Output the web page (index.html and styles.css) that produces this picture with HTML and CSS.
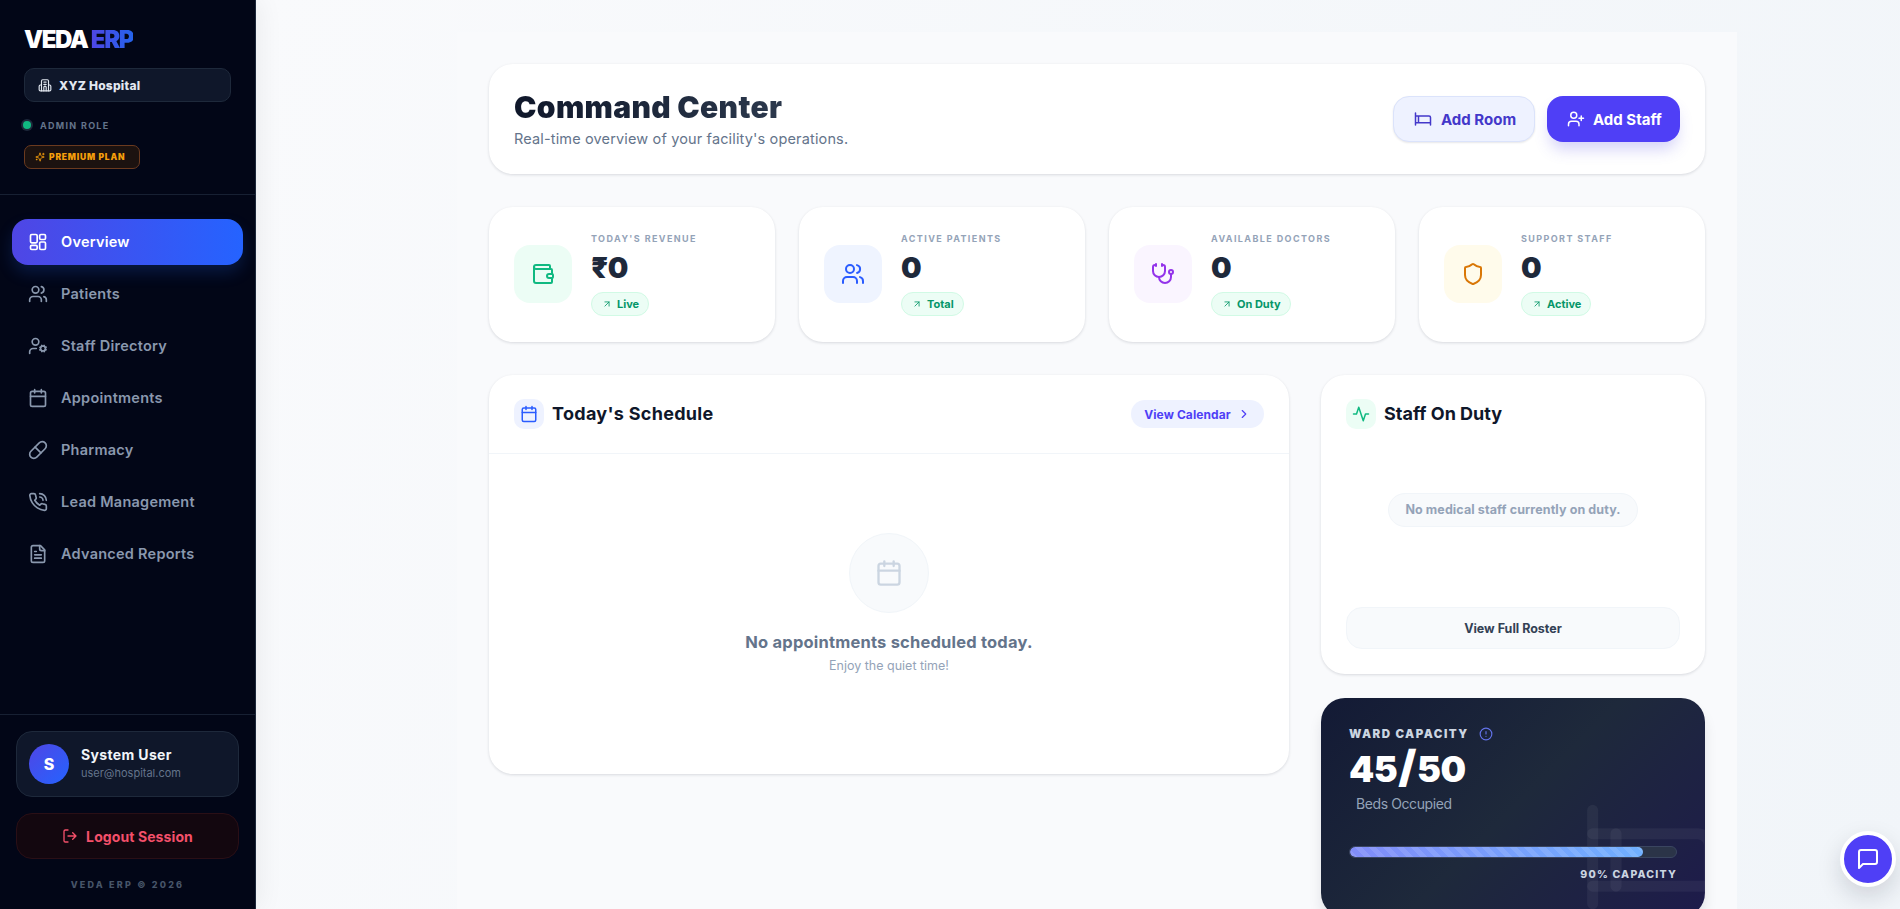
FILE: index.html
```html
<!DOCTYPE html>
<html lang="en">
<head>
<meta charset="utf-8">
<title>Veda ERP</title>
<link rel="stylesheet" href="styles.css">
</head>
<body>
<div class="app">
<aside class="sidebar">
  <div class="brand">
    <div class="logo">VEDA <span>ERP</span></div>
    <div class="hospital">
      <svg class="i14" viewBox="0 0 24 24" stroke="#6d8cff"><path d="M6 22V5a2 2 0 0 1 2-2h8a2 2 0 0 1 2 2v17"/><path d="M6 12H4a2 2 0 0 0-2 2v6a2 2 0 0 0 2 2h16a2 2 0 0 0 2-2v-6a2 2 0 0 0-2-2h-2"/><path d="M10 7h4M10 11h4M10 22v-6a2 2 0 0 1 4 0v6"/></svg>
      <span>XYZ Hospital</span>
    </div>
    <div class="role"><i class="dot"></i><span>ADMIN ROLE</span></div>
    <div class="plan">
      <svg class="i10" viewBox="0 0 24 24" stroke="#f59e0b"><path d="M9.900 15.500a2 2 0 0 0-1.400-1.400l-6.100-1.600a.5.5 0 0 1 0-1l6.100-1.600a2 2 0 0 0 1.400-1.400l1.600-6.100a.5.5 0 0 1 1 0l1.600 6.100a2 2 0 0 0 1.400 1.400l6.100 1.600a.5.5 0 0 1 0 1l-6.100 1.600a2 2 0 0 0-1.400 1.400l-1.600 6.100a.5.5 0 0 1-1 0z"/><path d="M20 3v4M22 5h-4M4 17v2M5 18H3"/></svg>
      <span>PREMIUM PLAN</span>
    </div>
  </div>
  <nav class="nav">
    <a class="nav-item active"><svg class="i20" viewBox="0 0 24 24"><rect x="3" y="3" width="8" height="10" rx="1.500"/><rect x="14" y="3" width="7" height="6" rx="1.500"/><rect x="14" y="12" width="7" height="9" rx="1.500"/><rect x="3" y="16" width="8" height="5" rx="1.500"/></svg>Overview</a>
    <a class="nav-item"><svg class="i20" viewBox="0 0 24 24"><circle cx="9" cy="7" r="4"/><path d="M2 21v-2a4 4 0 0 1 4-4h6a4 4 0 0 1 4 4v2M16 3.100a4 4 0 0 1 0 7.800M22 21v-2a4 4 0 0 0-3-3.900"/></svg>Patients</a>
    <a class="nav-item"><svg class="i20" viewBox="0 0 24 24"><circle cx="18" cy="15" r="3"/><circle cx="9" cy="7" r="4"/><path d="M10 15H6a4 4 0 0 0-4 4v2M21.700 16.400l-.9-.3M15.200 13.900l-.9-.3M16.600 18.700l.3-.9M19.100 12.200l.3-.9M19.600 18.700l-.4-1M16.800 12.300l-.4-1M14.300 16.600l1-.4M20.700 13.800l1-.4"/></svg>Staff Directory</a>
    <a class="nav-item"><svg class="i20" viewBox="0 0 24 24"><rect x="3" y="4" width="18" height="18" rx="2"/><path d="M8 2v4M16 2v4M3 10h18"/></svg>Appointments</a>
    <a class="nav-item"><svg class="i20" viewBox="0 0 24 24"><path d="m10.500 20.500 10-10a4.950 4.950 0 1 0-7-7l-10 10a4.950 4.950 0 1 0 7 7Z"/><path d="m8.500 8.500 7 7"/></svg>Pharmacy</a>
    <a class="nav-item"><svg class="i20" viewBox="0 0 24 24"><path d="M14 2a8 8 0 0 1 8 8M14 6a4 4 0 0 1 4 4"/><path d="M22 17v3a2 2 0 0 1-2.200 2 19.800 19.800 0 0 1-8.600-3 19.500 19.500 0 0 1-6-6 19.800 19.800 0 0 1-3-8.700A2 2 0 0 1 4.100 2h3a2 2 0 0 1 2 1.700c.1 1 .4 1.900.7 2.800a2 2 0 0 1-.5 2.100L8.100 9.900a16 16 0 0 0 6 6l1.300-1.300a2 2 0 0 1 2.100-.4c.9.3 1.800.6 2.800.7A2 2 0 0 1 22 17Z"/></svg>Lead Management</a>
    <a class="nav-item"><svg class="i20" viewBox="0 0 24 24"><path d="M15 2H6a2 2 0 0 0-2 2v16a2 2 0 0 0 2 2h12a2 2 0 0 0 2-2V7Z"/><path d="M14 2v4a2 2 0 0 0 2 2h4M10 9H8M16 13H8M16 17H8"/></svg>Advanced Reports</a>
  </nav>
  <div class="side-foot">
    <div class="user">
      <div class="avatar">S</div>
      <div class="user-text"><strong>System User</strong><small>user@hospital.com</small></div>
    </div>
    <button class="logout"><svg class="i16" viewBox="0 0 24 24"><path d="M9 21H5a2 2 0 0 1-2-2V5a2 2 0 0 1 2-2h4M16 17l5-5-5-5M21 12H9"/></svg>Logout Session</button>
    <div class="copy">VEDA ERP © 2026</div>
  </div>
</aside>
<main class="main">
  <div class="content">
    <section class="card header">
      <div>
        <h1>Command Center</h1>
        <p>Real-time overview of your facility's operations.</p>
      </div>
      <div class="actions">
        <button class="btn btn-light"><svg class="i18" viewBox="0 0 24 24"><path d="M2 4v16M2 8h18a2 2 0 0 1 2 2v10M2 17h20M6 8v9"/></svg>Add Room</button>
        <button class="btn btn-primary"><svg class="i18" viewBox="0 0 24 24"><path d="M16 21v-2a4 4 0 0 0-4-4H6a4 4 0 0 0-4 4v2"/><circle cx="9" cy="7" r="4"/><path d="M19 8v6M22 11h-6"/></svg>Add Staff</button>
      </div>
    </section>
    <section class="stats">
      <div class="card stat">
        <div class="stat-icon green"><svg class="i24" viewBox="0 0 24 24"><path d="M19 7V4a1 1 0 0 0-1-1H5a2 2 0 0 0 0 4h15a1 1 0 0 1 1 1v4h-3a2 2 0 0 0 0 4h3a1 1 0 0 0 1-1v-2a1 1 0 0 0-1-1"/><path d="M3 5v14a2 2 0 0 0 2 2h15a1 1 0 0 0 1-1v-4"/></svg></div>
        <div class="stat-body"><div class="label">TODAY'S REVENUE</div><div class="value">₹0</div><div class="pill"><svg class="i10" viewBox="0 0 24 24"><path d="M7 7h10v10M7 17 17 7"/></svg>Live</div></div>
      </div>
      <div class="card stat">
        <div class="stat-icon blue"><svg class="i24" viewBox="0 0 24 24"><circle cx="9" cy="7" r="4"/><path d="M2 21v-2a4 4 0 0 1 4-4h6a4 4 0 0 1 4 4v2M16 3.100a4 4 0 0 1 0 7.800M22 21v-2a4 4 0 0 0-3-3.900"/></svg></div>
        <div class="stat-body"><div class="label">ACTIVE PATIENTS</div><div class="value">0</div><div class="pill"><svg class="i10" viewBox="0 0 24 24"><path d="M7 7h10v10M7 17 17 7"/></svg>Total</div></div>
      </div>
      <div class="card stat">
        <div class="stat-icon purple"><svg class="i24" viewBox="0 0 24 24"><path d="M11 2v2M5 2v2M5 3H4a2 2 0 0 0-2 2v4a6 6 0 0 0 12 0V5a2 2 0 0 0-2-2h-1"/><path d="M8 15a6 6 0 0 0 12 0v-3"/><circle cx="20" cy="10" r="2"/></svg></div>
        <div class="stat-body"><div class="label">AVAILABLE DOCTORS</div><div class="value">0</div><div class="pill"><svg class="i10" viewBox="0 0 24 24"><path d="M7 7h10v10M7 17 17 7"/></svg>On Duty</div></div>
      </div>
      <div class="card stat">
        <div class="stat-icon amber"><svg class="i24" viewBox="0 0 24 24"><path d="M20 13c0 5-3.500 7.500-7.660 8.950a1 1 0 0 1-.67-.01C7.500 20.500 4 18 4 13V6a1 1 0 0 1 1-1c2 0 4.500-1.200 6.240-2.720a1.170 1.170 0 0 1 1.520 0C14.510 3.810 17 5 19 5a1 1 0 0 1 1 1z"/></svg></div>
        <div class="stat-body"><div class="label">SUPPORT STAFF</div><div class="value">0</div><div class="pill"><svg class="i10" viewBox="0 0 24 24"><path d="M7 7h10v10M7 17 17 7"/></svg>Active</div></div>
      </div>
    </section>
    <section class="lower">
      <div class="card schedule">
        <div class="sched-head">
          <div class="title"><span class="t-icon t-blue"><svg class="i18" viewBox="0 0 24 24"><rect x="3" y="4" width="18" height="18" rx="2"/><path d="M8 2v4M16 2v4M3 10h18"/></svg></span><h2 class="h2-wide">Today's Schedule</h2></div>
          <button class="view-cal">View Calendar<svg class="i14" viewBox="0 0 24 24"><path d="m9 18 6-6-6-6"/></svg></button>
        </div>
        <div class="empty">
          <div class="empty-icon"><svg class="i28" viewBox="0 0 24 24"><rect x="3" y="4" width="18" height="18" rx="2"/><path d="M8 2v4M16 2v4M3 10h18"/></svg></div>
          <div class="empty-title">No appointments scheduled today.</div>
          <div class="empty-sub">Enjoy the quiet time!</div>
        </div>
      </div>
      <div class="right">
        <div class="card duty">
          <div class="title"><span class="t-icon t-green"><svg class="i18" viewBox="0 0 24 24"><path d="M22 12h-4l-3 9L9 3l-3 9H2"/></svg></span><h2>Staff On Duty</h2></div>
          <div class="duty-mid"><span class="no-staff">No medical staff currently on duty.</span></div>
          <button class="roster">View Full Roster</button>
        </div>
        <div class="ward">
          <svg class="ward-bg" viewBox="0 0 24 24"><path d="M2 4v16"/><path d="M2 8h18a2 2 0 0 1 2 2v10"/><path d="M2 17h20"/><path d="M6 8v9"/></svg>
          <div class="ward-label">WARD CAPACITY<svg class="i14" viewBox="0 0 24 24"><circle cx="12" cy="12" r="10"/><path d="M12 8v4M12 16h.01"/></svg></div>
          <div class="ward-num">45<b>/</b>50</div>
          <div class="ward-sub">Beds Occupied</div>
          <div class="bar"><div class="bar-fill" style="width:90%"></div></div>
          <div class="bar-cap">90% CAPACITY</div>
        </div>
      </div>
    </section>
  </div>
</main>
</div>
<button class="chat"><svg class="i24" viewBox="0 0 24 24"><path d="M21 15a2 2 0 0 1-2 2H7l-4 4V5a2 2 0 0 1 2-2h14a2 2 0 0 1 2 2z"/></svg></button>
</body>
</html>
```
FILE: styles.css
```css
* { box-sizing: border-box; }
html, body { margin: 0; height: 100%; overflow: hidden; }
body { font-family: Inter, "Noto Sans", sans-serif; background: #f1f5f9; color: #0f172a; }
svg { fill: none; stroke: currentColor; stroke-width: 2; stroke-linecap: round; stroke-linejoin: round; flex: none; }
button { font-family: inherit; border: 0; cursor: pointer; white-space: nowrap; }
h1, h2, p { margin: 0; }
.i10 { width: 10px; height: 10px; } .i12 { width: 12px; height: 12px; } .i14 { width: 14px; height: 14px; }
.i16 { width: 16px; height: 16px; } .i18 { width: 18px; height: 18px; } .i20 { width: 20px; height: 20px; }
.i24 { width: 24px; height: 24px; } .i28 { width: 28px; height: 28px; }
.app { display: flex; height: 909px; }
.sidebar { width: 256px; flex: none; background: #020617; display: flex; flex-direction: column; border-right: 1px solid #1e293b; box-shadow: 4px 0 24px rgba(15, 23, 42, .06); position: relative; }
.brand { padding: 26px 24px 24px; height: 195px; border-bottom: 1px solid #172033; }
.logo { font-weight: 900; font-size: 24px; color: #fff; letter-spacing: -1.400px; line-height: 28px; }
.logo span { background: linear-gradient(90deg, #4f46e5, #2563eb); -webkit-background-clip: text; background-clip: text; color: transparent; }
.hospital { margin-top: 14px; width: 207px; height: 34px; border: 1px solid #1e293b; border-radius: 10px; background: #0f172a; display: flex; align-items: center; gap: 7px; padding-left: 13px; font-size: 12px; font-weight: 800; color: #e2e8f0; letter-spacing: .25px; }
.role { margin-top: 16px; display: flex; align-items: center; gap: 9px; margin-left: -2px; font-size: 9px; font-weight: 700; color: #64748b; letter-spacing: 1.300px; height: 14px; }
.dot { width: 8px; height: 8px; border-radius: 50%; background: #10b981; box-shadow: 0 0 0 2px #1e293b; margin-left: 1px; }
.plan { margin-top: 13px; display: inline-flex; align-items: center; gap: 4px; width: 116px; height: 24px; border: 1px solid #6b3a1f; border-radius: 7px; background: #1c1210; padding-left: 10px; font-size: 8.500px; font-weight: 900; color: #f59e0b; letter-spacing: .8px; white-space: nowrap; }
.nav { flex: 1; padding: 24px 12px 0; display: flex; flex-direction: column; gap: 6px; }
.nav-item { height: 46px; border-radius: 16px; display: flex; align-items: center; gap: 13px; padding: 0 0 2px 16px; font-size: 14.500px; font-weight: 600; color: #8a98ae; letter-spacing: .25px; }
.nav-item svg { margin-top: 2px; }
.nav-item.active { background: linear-gradient(90deg, #4f46e5, #2563ff); color: #fff; box-shadow: 0 8px 16px rgba(37, 99, 235, .2); }
.side-foot { border-top: 1px solid #172033; padding: 16px 16px 0; height: 195px; }
.user { height: 66px; border: 1px solid #1e293b; border-radius: 16px; background: #0f172a; display: flex; align-items: center; gap: 12px; padding-left: 12px; }
.avatar { width: 40px; height: 40px; border-radius: 50%; background: linear-gradient(135deg, #4f46e5, #2563ff); color: #fff; font-size: 16px; font-weight: 800; display: flex; align-items: center; justify-content: center; }
.user-text { display: flex; flex-direction: column; margin-top: -2px; }
.user-text strong { color: #f1f5f9; font-size: 14px; font-weight: 700; line-height: 20px; letter-spacing: .35px; }
.user-text small { color: #64748b; font-size: 11px; line-height: 16px; }
.logout { margin-top: 16px; width: 100%; height: 46px; border: 1px solid #2a0f16; border-radius: 16px; background: #13070f; color: #f4506a; display: flex; align-items: center; justify-content: center; gap: 8px; font-size: 14px; font-weight: 700; letter-spacing: .1px; }
.copy { margin-top: 20px; text-align: center; font-size: 9px; font-weight: 800; letter-spacing: 2.200px; color: #475569; }
.main { flex: 1; min-width: 0; padding: 32px 163px 0 201px; background: linear-gradient(110deg, #f9fafc, #f1f5f9); }
.content { width: 1280px; height: 877px; background: #f9fafc; padding: 32px 32px 0; }
.card { background: #fff; border-radius: 24px; box-shadow: 0 1px 3px rgba(15, 23, 42, .14); }
.header { height: 110px; display: flex; align-items: center; justify-content: space-between; padding: 0 25px; }
.header > div:first-child { margin-top: -3px; }
h1 { font-size: 30px; font-weight: 900; letter-spacing: .35px; line-height: 40px; background: linear-gradient(90deg, #0f172a, #334155); -webkit-background-clip: text; background-clip: text; color: transparent; }
.header p { margin-top: 2px; font-size: 14.500px; color: #64748b; line-height: 20px; letter-spacing: .15px; }
.actions { display: flex; gap: 12px; }
.btn { height: 46px; border-radius: 16px; display: flex; align-items: center; font-size: 15px; font-weight: 700; padding: 0 0 0 20px; }
.btn-light { width: 142px; gap: 9px; background: #eef2ff; color: #4338ca; border: 1px solid #dbe3fb; box-shadow: 0 1px 2px rgba(15, 23, 42, .1); }
.btn-primary { width: 133px; gap: 8px; background: #4f3ff6; color: #fff; box-shadow: 0 10px 15px -3px rgba(79, 70, 229, .25); }
.stats { margin-top: 33px; display: grid; grid-template-columns: repeat(4, 1fr); gap: 24px; }
.stat { height: 135px; display: flex; align-items: flex-start; padding: 24px 24px 24px 25px; gap: 19px; }
.stat-icon { margin-top: 14px; width: 58px; height: 58px; border-radius: 16px; display: flex; align-items: center; justify-content: center; }
.green { background: #ecfdf5; color: #10b981; } .blue { background: #eff4ff; color: #2a5cff; } .purple { background: #faf5ff; color: #9333ea; } .amber { background: #fffbeb; color: #d97706; }
.label { font-size: 9px; font-weight: 700; letter-spacing: 1.400px; color: #94a3b8; line-height: 16px; }
.value { font-size: 29px; font-weight: 900; line-height: 34px; color: #1e293b; margin-top: 4px; letter-spacing: -.5px; }
.pill { margin-top: 7px; display: inline-flex; align-items: center; gap: 5px; height: 24px; padding: 0 9px 0 10px; border: 1px solid #d1fae5; border-radius: 12px; background: #ecfdf5; color: #059669; font-size: 11px; font-weight: 700; }
.lower { margin-top: 33px; display: grid; grid-template-columns: 800px 384px; gap: 32px; align-items: start; }
.schedule { height: 399px; display: flex; flex-direction: column; }
.sched-head { height: 79px; padding: 0 25px; border-bottom: 1px solid #f1f5f9; display: flex; align-items: center; justify-content: space-between; }
.title { display: flex; align-items: center; gap: 8px; }
.t-icon { width: 30px; height: 30px; border-radius: 10px; display: flex; align-items: center; justify-content: center; }
.t-blue { background: #eef2ff; color: #2a5cff; }
.t-green { background: #ecfdf5; color: #10b981; }
h2 { font-size: 18px; font-weight: 700; color: #0f172a; margin-bottom: 2px; }
.h2-wide { letter-spacing: .3px; }
.view-cal { width: 133px; height: 28px; border-radius: 14px; background: #eef2ff; color: #4f3ff6; display: flex; align-items: center; justify-content: center; gap: 6px; font-size: 12px; font-weight: 700; letter-spacing: .1px; }
.empty { flex: 1; display: flex; flex-direction: column; align-items: center; padding-top: 79px; }
.empty-icon { width: 80px; height: 80px; border-radius: 50%; background: #f8fafc; border: 1px solid #f1f5f9; color: #cbd5e1; display: flex; align-items: center; justify-content: center; }
.empty-title { margin-top: 17px; font-size: 16.500px; font-weight: 700; color: #64748b; line-height: 24px; letter-spacing: .2px; }
.empty-sub { margin-top: 2px; font-size: 12.500px; color: #94a3b8; line-height: 20px; }
.right { display: flex; flex-direction: column; gap: 24px; }
.duty { height: 299px; padding: 24px 25px 25px; display: flex; flex-direction: column; }
.duty-mid { flex: 1; display: flex; align-items: center; justify-content: center; padding-bottom: 17px; }
.no-staff { height: 34px; display: flex; align-items: center; padding: 0 16px; border: 1px solid #f1f5f9; border-radius: 17px; background: #f8fafc; color: #94a3b8; font-size: 12.500px; font-weight: 700; letter-spacing: .1px; white-space: nowrap; }
.roster { height: 42px; border: 1px solid #f1f5f9; border-radius: 16px; background: #f8fafc; color: #334155; font-size: 12.500px; font-weight: 700; }
.ward { position: relative; height: 219px; border-radius: 24px; overflow: hidden; padding: 28px 28px 0 28px; color: #fff; background: linear-gradient(135deg, #131a35, #1e293b 50%, #1e1b4b); box-shadow: 0 10px 15px -3px rgba(15, 23, 42, .15); }
.ward-bg { position: absolute; right: -16px; top: 89px; width: 140px; height: 140px; stroke: rgba(255, 255, 255, .05); stroke-width: 1.900; }
.ward-label { display: flex; align-items: center; gap: 10px; font-size: 11.500px; font-weight: 900; letter-spacing: 1.500px; color: #cbd5e1; line-height: 16px; }
.ward-label svg { color: #6272e8; }
.ward-num { margin-top: 6px; font-size: 36px; font-weight: 900; line-height: 36px; color: #fff; letter-spacing: -.5px; }
.ward-num b { font-weight: 900; font-size: 44px; margin: 0 1px; }
.ward-sub { margin: 7px 0 0 7px; font-size: 14px; color: #94a3b8; letter-spacing: -.4px; line-height: 20px; }
.bar { position: relative; margin-top: 32px; height: 12px; border-radius: 6px; border: 1px solid #3a4560; background: #2b3448; overflow: hidden; }
.bar-fill { height: 100%; border-radius: 6px; background: repeating-linear-gradient(45deg, rgba(255, 255, 255, .1) 0 5px, transparent 5px 10px), linear-gradient(90deg, #818cf8, #70b0ff); }
.bar-cap { position: relative; margin-top: 9px; text-align: right; font-size: 10.500px; font-weight: 800; letter-spacing: 1.200px; color: #cbd5e1; line-height: 16px; }
.chat { position: absolute; right: 4px; bottom: 22px; width: 56px; height: 56px; border-radius: 50%; border: 4px solid #fff; background: #4f3ff6; color: #fff; display: flex; align-items: center; justify-content: center; box-shadow: 0 10px 25px rgba(15, 23, 42, .15); padding: 0; }
```
